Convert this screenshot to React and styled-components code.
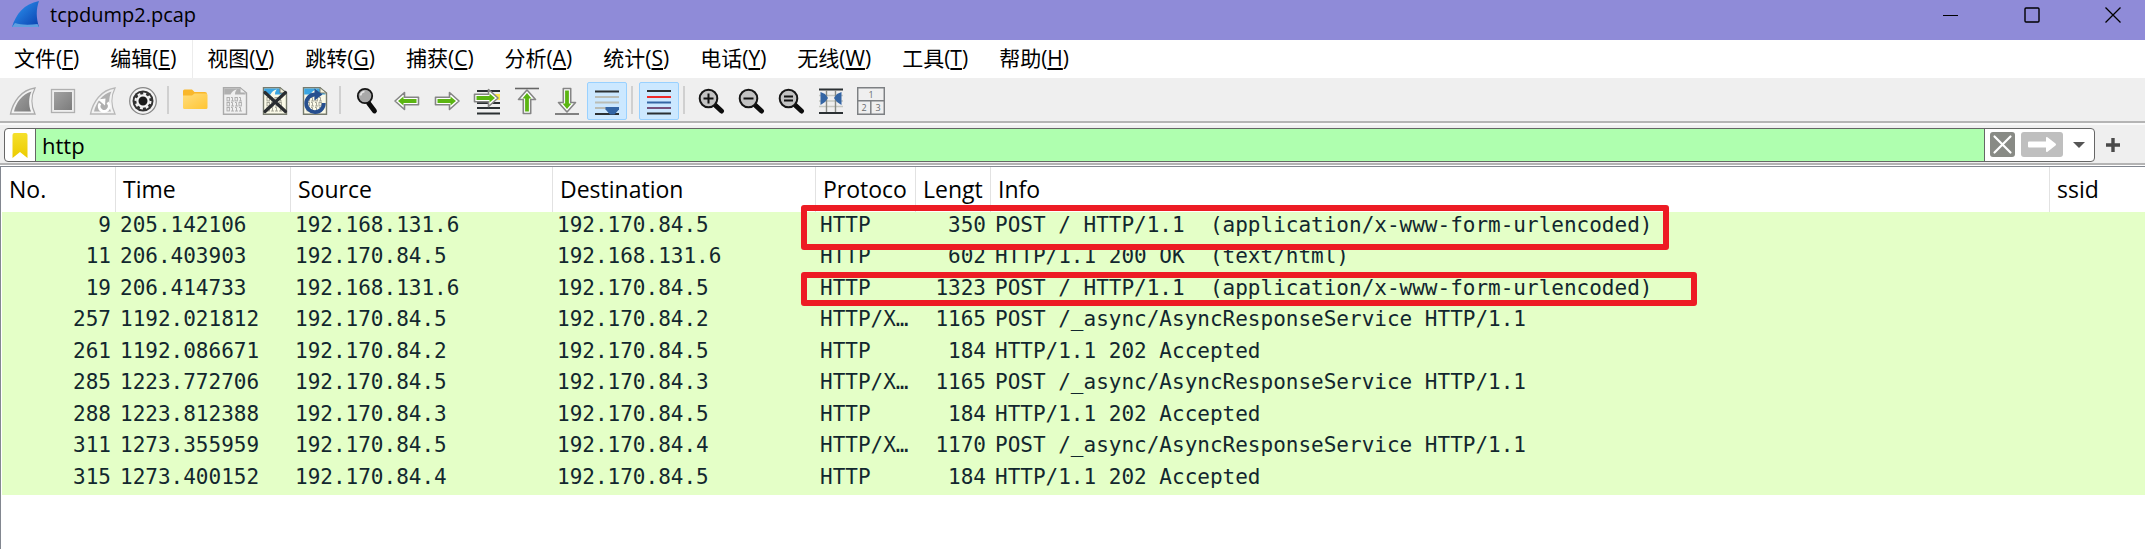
import React from "react";
import styled, { createGlobalStyle, css } from "styled-components";

const UI = '"Open Sans", "Noto Sans CJK SC", sans-serif';
const MONO = '"DejaVu Sans Mono", monospace';

const GlobalStyle = createGlobalStyle`
  *, *::before, *::after { box-sizing: border-box; }
  body { margin: 0; background: #fff; color: #000; font-family: ${UI}; }
  button, input { font: inherit; color: inherit; }
`;

const Window = styled.div`
  display: flex;
  flex-direction: column;
  min-height: 100vh;
`;

const SharedDefs = styled.svg`
  position: absolute;
`;

const TitleBar = styled.header`
  display: flex;
  align-items: flex-start;
  height: 40px;
  padding-left: 11px;
  background: #8f8bd8;
`;

const AppTitle = styled.h1`
  flex: 1;
  margin: 0 0 0 10px;
  font-size: 20px;
  font-weight: 400;
  line-height: 30px;
`;

const CaptionButton = styled.button`
  display: flex;
  align-items: center;
  justify-content: center;
  width: 81px;
  height: 29px;
  padding: 0;
  border: 0;
  background: none;
`;

const CaptionButtons = styled.div`
  display: flex;
  margin-right: -8px;
`;

const MenuBar = styled.nav`
  display: flex;
  height: 38px;
  background: #fff;
`;

const MenuItem = styled.button`
  height: 38px;
  padding: 0 17px 2px 14px;
  border: 0;
  background: none;
  font-size: 21px;
  line-height: 36px;
  white-space: nowrap;
  box-shadow: ${(p) => (p.$divided ? "inset -1px 0 #ececec" : "none")};

  u {
    text-decoration-thickness: 2px;
    text-underline-offset: 2px;
  }
`;

const ToolBar = styled.div`
  display: flex;
  height: 45px;
  padding: 4px 0 0 3px;
  background: #efefef;
  border-bottom: 2px solid #b4b4b4;
`;

const ToolButton = styled.button`
  display: flex;
  align-items: center;
  justify-content: center;
  width: 40px;
  height: 38px;
  padding: 0;
  border: 1px solid transparent;
  border-radius: 2px;
  background: none;
  ${(p) =>
    p.$active &&
    css`
      background: #cce8ff;
      border-color: #99d1ff;
    `}
`;

const ToolSeparator = styled.span`
  width: 12px;
  height: 28px;
  margin-top: 4px;
  background: linear-gradient(#d0d0d0, #d0d0d0) 4px 0 / 2px 100% no-repeat;
`;

const FilterBar = styled.form`
  display: flex;
  align-items: center;
  height: 42px;
  padding: 1px 14px 0 4px;
  background: #efefef;
  border-top: 2px solid #fafafa;
  border-bottom: 2px solid #b4b4b4;
`;

const FilterBox = styled.div`
  display: flex;
  flex: 1;
  height: 34px;
  border: 1px solid #666;
  border-radius: 4px;
  background: #fff;
  overflow: hidden;
`;

const FilterInput = styled.input`
  flex: 1;
  min-width: 0;
  padding: 0 6px;
  border: solid #666;
  border-width: 0 1px;
  background: #afffaf;
  font-size: 22px;
  outline: none;
`;

const FilterButton = styled.button`
  display: flex;
  align-items: center;
  justify-content: center;
  width: ${(p) => p.$width};
  padding: 0;
  border: 0;
  background: none;
`;

const PacketPanel = styled.main`
  position: relative;
  flex: 1;
  margin-top: 1px;
  border-top: 1px solid #828790;
  border-left: 1px solid #828790;
  padding-left: 1px;
`;

const PacketTable = styled.table`
  width: 100%;
  table-layout: fixed;
  border-collapse: separate;
  border-spacing: 0;
`;

const HeadCell = styled.th`
  height: 45px;
  padding: 0 0 2px 7px;
  border-right: 1px solid #e2e2e2;
  font-size: 23px;
  font-weight: 400;
  text-align: left;
  white-space: nowrap;

  &:last-child { border-right: 0; }
`;

const PacketRow = styled.tr`
  height: 31px;
  background: #e4ffc7;
  &:nth-child(even) { height: 32px; }
`;

const Cell = styled.td`
  padding: 0 5px 0 4px;
  color: #12272e;
  font-family: ${MONO};
  font-size: 21px;
  line-height: 26px;
  text-align: ${(p) => (p.$right ? "right" : "left")};
  vertical-align: top;
  white-space: pre;
`;

const Highlight = styled.div`
  position: absolute;
  left: 800px;
  top: ${(p) => p.$top};
  width: ${(p) => p.$width};
  height: ${(p) => p.$height};
  border: 6px solid #ed1c24;
  border-radius: 3px;
  pointer-events: none;
`;

const Icon = ({ size = 28, children }) => (
  <svg width={size} height={size} viewBox={`0 0 ${size} ${size}`} fill="none" aria-hidden="true">
    {children}
  </svg>
);

const Gradients = () => (
  <SharedDefs width="0" height="0" aria-hidden="true">
    <defs>
      <linearGradient id="grey" x1="0" y1="0" x2="1" y2="1">
        <stop offset="0" stopColor="#a2a2a2" />
        <stop offset="1" stopColor="#7c7c7c" />
      </linearGradient>
      <linearGradient id="blue" x1="0" y1="0" x2="1" y2="1">
        <stop offset="0" stopColor="#2f9bf5" />
        <stop offset="1" stopColor="#0a3fae" />
      </linearGradient>
      <linearGradient id="folder" x1="0" y1="0" x2="1" y2="1">
        <stop offset="0" stopColor="#ffdd7d" />
        <stop offset="1" stopColor="#ffc533" />
      </linearGradient>
      <linearGradient id="mark" x1="0" y1="0" x2="0" y2="1">
        <stop offset="0" stopColor="#f5e02c" />
        <stop offset="1" stopColor="#eccb00" />
      </linearGradient>
    </defs>
  </SharedDefs>
);

const Logo = () => (
  <Icon size={29}>
    <path d="M1 27C5 14 13 4 28 1c-3 8-3 17 0 26z" fill="url(#blue)" />
    <path d="M1 27l3-4c6 2 14 2 22.500 1l1.500 3z" fill="#5f9fdf" />
  </Icon>
);

const Fin = () => (
  <Icon>
    <path d="M1.500 27C4 15 12 3 26 1c-4 8-4 18 0 26z" fill="#f2f2f2" stroke="#aaa" strokeWidth="1.300" />
    <path d="M5 24.500C7 16 13 7 22.500 4.500c-3 6-3 14-.5 20z" fill="url(#grey)" />
  </Icon>
);

const Stop = () => (
  <Icon>
    <rect x="2.500" y="2.500" width="23" height="23" fill="#eee" stroke="#b0b0b0" strokeWidth="1.300" />
    <rect x="5" y="5" width="18" height="18" fill="url(#grey)" />
  </Icon>
);

const Restart = () => (
  <Icon>
    <path d="M1.500 27C4 15 12 3 26 1c-4 8-4 18 0 26z" fill="#f2f2f2" stroke="#b8b8b8" strokeWidth="1.300" />
    <path d="M5 24.500C7 16 13 7 22.500 4.500c-3 6-3 14-.5 20z" fill="#b0b0b0" />
    <path d="M18.500 15.500A5 5 0 1 1 11 16.500" stroke="#fff" strokeWidth="2.800" />
    <path d="M9 12.500l7.500-1-.5 7z" fill="#fff" />
  </Icon>
);

const Options = () => (
  <Icon>
    <circle cx="14" cy="14" r="13.300" fill="#f4f4f4" stroke="#888" strokeWidth="1.300" />
    <circle cx="14" cy="14" r="10.500" fill="#333" />
    <circle cx="14" cy="14" r="5.600" fill="#1a1a1a" stroke="#f4f4f4" strokeWidth="2.200" />
    <circle cx="14" cy="14" r="7.400" stroke="#f4f4f4" strokeWidth="2.200" strokeDasharray="2.900 2.911" />
  </Icon>
);

const Folder = () => (
  <Icon>
    <path d="M2 4q0-1.500 1.500-1.500H11l2.500 2.500H24q2 0 2 2v4H2z" fill="#f9b72b" />
    <path d="M2 8.500h9l2.500-2H25q1.500 0 1.500 1.500v12.500q0 1.500-1.500 1.500H3.500Q2 22 2 20.500z" fill="url(#folder)" />
  </Icon>
);

const Bits = ({ color }) => (
  <g stroke={color} strokeWidth="1">
    {["0101", "0110", "0111"].map((digits, row) =>
      [...digits].map((digit, col) => {
        const x = 6 + col * 4;
        const y = 10.5 + row * 5;
        return digit === "1" ? (
          <path key={`${row}${col}`} d={`M${x} ${y}h1.500v3.500M${x} ${y + 3.5}h3`} />
        ) : (
          <rect key={`${row}${col}`} x={x} y={y} width="2.400" height="3.400" />
        );
      })
    )}
  </g>
);

const Page = ({ off }) => (
  <>
    <path d="M2.500.700H19L25.500 6v21.300h-23z" fill={off ? "#f0f0f0" : "#fbfae8"} stroke={off ? "#aaa" : "#777b6e"} strokeWidth="1.400" />
    <path d="M3.200 1.400H18L24.800 7.400H14c0-2 .5-4 2-5-3 .5-5 2-6.500 5H3.200z" fill={off ? "#b0b0b0" : "#3ba5e2"} />
    <path d="M19 .700V6h6.500z" fill={off ? "#eee" : "#f4f2dc"} stroke={off ? "#aaa" : "#777b6e"} />
    <Bits color={off ? "#b0b0b0" : "#a5a597"} />
  </>
);

const FileOff = () => (
  <Icon>
    <Page off />
  </Icon>
);

const FileClose = () => (
  <Icon>
    <Page />
    <path d="M4 5.500L24.500 24.500M24.500 5.500L4 24.500" stroke="#2a2d30" strokeWidth="3.200" strokeLinecap="round" />
  </Icon>
);

const FileReload = () => (
  <Icon>
    <Page />
    <path d="M22.800 16A8.800 8.800 0 1 1 14 7.500" stroke="#264f8f" strokeWidth="3.800" />
    <path d="M13.500 1.500l8 6-8 6z" fill="#264f8f" />
  </Icon>
);

const Lens = ({ sign }) => (
  <Icon>
    <path d="M17.500 17.500l7 6.500" stroke="#0c0c0c" strokeWidth="5" strokeLinecap="round" />
    <circle cx="11.500" cy="11.500" r="8.800" fill="#c3c3c3" stroke="#161616" strokeWidth="2" />
    <path d={sign} stroke="#111" strokeWidth="2" />
  </Icon>
);

const Find = () => (
  <Icon>
    <path d="M15.500 16l6 8" stroke="#0c0c0c" strokeWidth="4.800" strokeLinecap="round" />
    <circle cx="12" cy="9" r="7.200" fill="#a9a9a9" stroke="#161616" strokeWidth="1.800" />
    <path d="M7.500 8.500a5 5 0 0 1 4-4" stroke="#e4e4e4" strokeWidth="1.500" />
  </Icon>
);

const Arrow = ({ transform }) => (
  <g transform={transform}>
    <path
      d="M2 14L11.500 5.500v4.800H25.500v7.400H11.500v4.800z"
      fill="#fff"
      stroke="#858585"
      strokeWidth="1.600"
      strokeLinejoin="round"
    />
    <path d="M5 14L10.500 9.500v2.600H23.500v3.800H10.500v2.600z" fill="#5bb512" />
  </g>
);

const GoBack = () => (
  <Icon>
    <Arrow />
  </Icon>
);

const GoForward = () => (
  <Icon>
    <Arrow transform="rotate(180 14 14)" />
  </Icon>
);

const GoTo = () => (
  <Icon>
    <path d="M4 4h23M4 16h23M4 21h23M4 26.500h23" stroke="#2b3033" strokeWidth="2" />
    <path d="M16 7h11v6H16z" fill="#fce94f" />
    <Arrow transform="translate(-1 -3) rotate(180 14 14)" />
  </Icon>
);

const GoTop = () => (
  <Icon>
    <path d="M2 1.500h24" stroke="#666" strokeWidth="1.600" />
    <Arrow transform="translate(0 1) rotate(90 14 14)" />
  </Icon>
);

const GoBottom = () => (
  <Icon>
    <path d="M2 27h24" stroke="#666" strokeWidth="1.600" />
    <Arrow transform="translate(0 -1) rotate(-90 14 14)" />
  </Icon>
);

const AutoScroll = () => (
  <Icon>
    <path d="M2 4.500h24M2 27h24" stroke="#2b3033" strokeWidth="2" />
    <path d="M2 10h24M2 15.500h24M2 21h12" stroke="#babdb6" strokeWidth="2" />
    <path d="M12.500 20h13.500v2.500L21.500 27.500h-4.500L12.500 22.500z" fill="#3465a4" />
  </Icon>
);

const Colorize = () => (
  <Icon>
    <path d="M2 4h24M2 26.500h24" stroke="#2b3033" strokeWidth="2" />
    <path d="M2 10h24" stroke="#ef2929" strokeWidth="2" />
    <path d="M2 15.500h24" stroke="#3465a4" strokeWidth="2" />
    <path d="M2 21h24" stroke="#75507b" strokeWidth="2" />
  </Icon>
);

const ResizeColumns = () => (
  <Icon>
    <path d="M2 2.500h24M2 26h24" stroke="#2b3033" strokeWidth="2" />
    <path d="M2 8.500h24M2 14h24M2 19.500h24" stroke="#c5c7c1" strokeWidth="1.600" />
    <path d="M9.500 3v22M18.500 3v22" stroke="#888a85" strokeWidth="1.400" />
    <path d="M3.500 5l4.500 2 3 4-3 4-4.500 3zM24.500 5L20 7l-3 4 3 4 4.500 3z" fill="#3465a4" />
  </Icon>
);

const LayoutIcon = () => (
  <Icon>
    <path d="M.700.700h26.600v26.600H.700zM.700 13.800h26.600M13.800 13.800v13.500" stroke="#7d8083" strokeWidth="1.500" />
    <g fill="#6a6c6e" fontFamily="Open Sans, sans-serif" fontSize="9" textAnchor="middle">
      <text x="14" y="10.500">1</text>
      <text x="7" y="24">2</text>
      <text x="21" y="24">3</text>
    </g>
  </Icon>
);

const TOOLS = [
  ["开始捕获", Fin],
  ["停止捕获", Stop],
  ["重新开始捕获", Restart],
  ["捕获选项", Options],
  null,
  ["打开", Folder],
  ["保存", FileOff],
  ["关闭", FileClose],
  ["重新加载", FileReload],
  null,
  ["查找", Find],
  ["后退", GoBack],
  ["前进", GoForward],
  ["转到分组", GoTo],
  ["首个分组", GoTop],
  ["最后分组", GoBottom],
  ["自动滚动", AutoScroll, true],
  null,
  ["着色", Colorize, true],
  null,
  ["放大", () => <Lens sign="M6.500 11.500h10M11.500 6.500v10" />],
  ["缩小", () => <Lens sign="M6.500 11.500h10" />],
  ["正常大小", () => <Lens sign="M7 9.500h9M7 13.500h9" />],
  ["调整列宽", ResizeColumns],
  ["重置布局", LayoutIcon],
];

const MENUS = [
  ["文件", "F"],
  ["编辑", "E"],
  ["视图", "V"],
  ["跳转", "G"],
  ["捕获", "C"],
  ["分析", "A"],
  ["统计", "S"],
  ["电话", "Y"],
  ["无线", "W"],
  ["工具", "T"],
  ["帮助", "H"],
];

const COLUMNS = [
  ["No.", 114],
  ["Time", 175],
  ["Source", 262],
  ["Destination", 263],
  ["Protoco", 100],
  ["Lengt", 75],
  ["Info", null],
  ["ssid", 95],
];

const FORM_POST = "POST / HTTP/1.1  (application/x-www-form-urlencoded)";
const ASYNC_POST = "POST /_async/AsyncResponseService HTTP/1.1";
const ACCEPTED = "HTTP/1.1 202 Accepted";

const PACKETS = [
  ["9", "205.142106", "192.168.131.6", "192.170.84.5", "HTTP", "350", FORM_POST],
  ["11", "206.403903", "192.170.84.5", "192.168.131.6", "HTTP", "602", "HTTP/1.1 200 OK  (text/html)"],
  ["19", "206.414733", "192.168.131.6", "192.170.84.5", "HTTP", "1323", FORM_POST],
  ["257", "1192.021812", "192.170.84.5", "192.170.84.2", "HTTP/X…", "1165", ASYNC_POST],
  ["261", "1192.086671", "192.170.84.2", "192.170.84.5", "HTTP", "184", ACCEPTED],
  ["285", "1223.772706", "192.170.84.5", "192.170.84.3", "HTTP/X…", "1165", ASYNC_POST],
  ["288", "1223.812388", "192.170.84.3", "192.170.84.5", "HTTP", "184", ACCEPTED],
  ["311", "1273.355959", "192.170.84.5", "192.170.84.4", "HTTP/X…", "1170", ASYNC_POST],
  ["315", "1273.400152", "192.170.84.4", "192.170.84.5", "HTTP", "184", ACCEPTED],
];

export default function App() {
  return (
    <Window>
      <GlobalStyle />
      <Gradients />
      <TitleBar>
        <Logo />
        <AppTitle>tcpdump2.pcap</AppTitle>
        <CaptionButtons>
          <CaptionButton aria-label="最小化">
            <Icon size={16}>
              <path d="M0 8.500h15" stroke="#000" />
            </Icon>
          </CaptionButton>
          <CaptionButton aria-label="最大化">
            <Icon size={16}>
              <rect x="1" y="1" width="14" height="14" rx="1" stroke="#000" strokeWidth="1.400" />
            </Icon>
          </CaptionButton>
          <CaptionButton aria-label="关闭">
            <Icon size={16}>
              <path d="M.500.500l15 15M15.500.500l-15 15" stroke="#000" strokeWidth="1.300" />
            </Icon>
          </CaptionButton>
        </CaptionButtons>
      </TitleBar>

      <MenuBar>
        {MENUS.map(([name, key]) => (
          <MenuItem key={key} $divided={key === "E"}>
            {name}(<u>{key}</u>)
          </MenuItem>
        ))}
      </MenuBar>

      <ToolBar role="toolbar">
        {TOOLS.map((tool, i) => {
          if (!tool) return <ToolSeparator key={i} />;
          const [label, Glyph, active] = tool;
          return (
            <ToolButton key={label} aria-label={label} $active={active}>
              <Glyph />
            </ToolButton>
          );
        })}
      </ToolBar>

      <FilterBar onSubmit={(e) => e.preventDefault()}>
        <FilterBox>
          <FilterButton type="button" $width="30px" aria-label="书签">
            <Icon size={26}>
              <path d="M5.500 3q0-2 2-2h11q2 0 2 2v23l-7.500-6-7.500 6z" fill="url(#mark)" />
            </Icon>
          </FilterButton>
          <FilterInput aria-label="显示过滤器" defaultValue="http" spellCheck={false} />
          <FilterButton type="button" $width="35px" aria-label="清除">
            <Icon size={25}>
              <rect width="25" height="25" rx="3" fill="#888a85" />
              <path d="M4.500 4.500l16 16M20.500 4.500l-16 16" stroke="#fff" strokeWidth="2.200" strokeLinecap="round" />
            </Icon>
          </FilterButton>
          <FilterButton type="submit" $width="43px" aria-label="应用">
            <svg width="42" height="25" viewBox="0 0 42 25" aria-hidden="true">
              <rect width="42" height="25" rx="3" fill="#bfbfbf" />
              <path d="M8 9.500h17V6q0-1.500 1.500-.8l8 6.300q1 1 0 2l-8 6.300q-1.500.7-1.500-.8v-3.500H8q-1 0-1-1v-4q0-1 1-1z" fill="#fff" />
            </svg>
          </FilterButton>
          <FilterButton type="button" $width="31px" aria-label="历史记录">
            <Icon size={12}>
              <path d="M0 3h12L6 9z" fill="#555" />
            </Icon>
          </FilterButton>
        </FilterBox>
        <FilterButton type="button" $width="36px" aria-label="添加">
          <Icon size={14}>
            <path d="M7 0v14M0 7h14" stroke="#4a4a4a" strokeWidth="3.400" />
          </Icon>
        </FilterButton>
      </FilterBar>

      <PacketPanel>
        <PacketTable>
          <colgroup>
            {COLUMNS.map(([name, width]) => (
              <col key={name} width={width ?? undefined} />
            ))}
          </colgroup>
          <thead>
            <tr>
              {COLUMNS.map(([name]) => (
                <HeadCell key={name} scope="col">
                  {name}
                </HeadCell>
              ))}
            </tr>
          </thead>
          <tbody>
            {PACKETS.map((packet) => (
              <PacketRow key={packet[0]}>
                {packet.map((value, i) => (
                  <Cell key={i} $right={i === 0 || i === 5}>
                    {value}
                  </Cell>
                ))}
                <Cell />
              </PacketRow>
            ))}
          </tbody>
        </PacketTable>
        <Highlight $top="38px" $width="868px" $height="45px" />
        <Highlight $top="105px" $width="896px" $height="34px" />
      </PacketPanel>
    </Window>
  );
}
